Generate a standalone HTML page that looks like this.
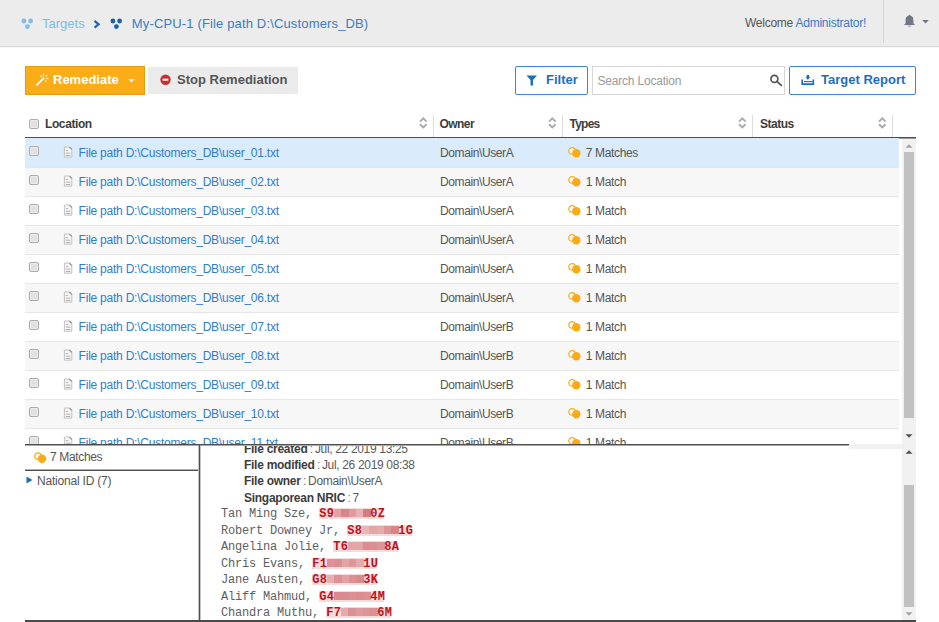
<!DOCTYPE html>
<html><head><meta charset="utf-8">
<style>
*{box-sizing:border-box;margin:0;padding:0}
html,body{width:939px;height:622px;overflow:hidden;background:#fff;font-family:"Liberation Sans",sans-serif;color:#555}
.abs{position:absolute}
.t{position:absolute;white-space:pre;line-height:1}
#hdr{position:absolute;left:0;top:0;width:939px;height:47px;background:#ececec;border-bottom:1px solid #dadada}
.cb{position:absolute;width:10px;height:10px;border:1px solid #ababab;border-radius:2px;background:#e1e1e1;box-shadow:inset 0 0 0 1px #ececec}
.row{position:absolute;left:25px;width:874px;height:29px;border-bottom:1px solid #e6e6e6}
.row .cb{left:4px;top:7px}
.fi{position:absolute;left:38px;top:7px}
.lnk{position:absolute;left:53.6px;top:8px;font-size:12px;line-height:1;color:#2f7dcc;white-space:pre;letter-spacing:-0.23px}
.own{position:absolute;left:415px;top:8px;font-size:12px;line-height:1;color:#555;white-space:pre;letter-spacing:-0.39px}
.mi{position:absolute;left:543px;top:7px}
.mt{position:absolute;left:560.8px;top:8px;font-size:12px;line-height:1;color:#555;white-space:pre;letter-spacing:-0.35px}
.hd{position:absolute;top:117.5px;font-size:12px;line-height:1;font-weight:bold;color:#3d3d3d;white-space:pre;letter-spacing:-0.3px}
.sort{position:absolute;top:117px}
.div{position:absolute;top:115px;width:1px;height:22px;background:#dcdcdc}
.sb{position:absolute;left:902px;width:14px;background:#f1f1f1}
.thumb{position:absolute;left:2px;width:10px;background:#c1c1c1}
.mono{position:absolute;left:221px;font-family:"Liberation Mono",monospace;font-size:12px;line-height:1;letter-spacing:-0.2px;color:#606060;white-space:pre}
.nr{position:absolute;height:11px;background:#f5dcdc;font-family:"Liberation Mono",monospace;font-weight:bold;font-size:12px;line-height:1;color:#c0101a;letter-spacing:0.3px}
.nr b{position:absolute;top:0}
.nr i{position:absolute;top:1px;height:8px;display:block}
.det{position:absolute;left:244px;font-size:12px;line-height:1;color:#5a5a5a;white-space:pre;letter-spacing:-0.33px}
.det b{color:#3d3d3d;letter-spacing:-0.27px}
.det s{text-decoration:none;color:#777;margin:0 2px 0 2.4px}
</style></head>
<body>
<!-- HEADER -->
<div id="hdr"></div>
<svg class="abs" style="left:21px;top:18px" width="13" height="12" viewBox="0 0 13 12"><circle cx="2.9" cy="3" r="2.4" fill="#7dbde9"/><circle cx="9.6" cy="3" r="2.4" fill="#7dbde9"/><circle cx="6.4" cy="8.6" r="2.4" fill="#7dbde9"/></svg>
<div class="t" style="left:42px;top:16.5px;font-size:13px;color:#7dbde9">Targets</div>
<svg class="abs" style="left:93px;top:20px" width="8" height="9" viewBox="0 0 8 9"><path d="M1.5 0.9 L5.6 4.3 L1.5 7.7" fill="none" stroke="#1b68b8" stroke-width="2.2"/></svg>
<svg class="abs" style="left:110px;top:18px" width="13" height="12" viewBox="0 0 13 12"><circle cx="2.9" cy="3" r="2.4" fill="#1b5fa8"/><circle cx="9.6" cy="3" r="2.4" fill="#1b5fa8"/><circle cx="6.4" cy="8.6" r="2.4" fill="#1b5fa8"/></svg>
<div class="t" style="left:131.8px;top:16.5px;font-size:13px;color:#3b7cc4;letter-spacing:0.15px">My-CPU-1 (File path D:\Customers_DB)</div>
<div class="t" style="left:745px;top:17px;font-size:12px;color:#555;letter-spacing:-0.25px">Welcome <span style="color:#3b7cc4">Administrator!</span></div>
<div class="abs" style="left:883px;top:0;width:1px;height:43px;background:#d4d4d4"></div><div class="abs" style="left:0;top:47px;width:939px;height:1px;background:#f5f5f5"></div>
<svg class="abs" style="left:903px;top:14px" width="13" height="14" viewBox="0 0 13 14"><path d="M6.5 0.6 L7.4 1.6 C9.6 2.3 10.4 4 10.4 6.3 L10.4 9.2 L12 11 L1 11 L2.6 9.2 L2.6 6.3 C2.6 4 3.4 2.3 5.6 1.6Z" fill="#6f7780"/><path d="M4.6 11.8 Q6.5 13.9 8.4 11.8Z" fill="#6f7780"/></svg>
<svg class="abs" style="left:922px;top:20px" width="7" height="4" viewBox="0 0 7 4"><path d="M0.2 0 L6.8 0 L3.5 3.4Z" fill="#6f7780"/></svg>

<!-- TOOLBAR -->
<div class="abs" style="left:25px;top:66px;width:120px;height:29px;background:#fbad18;border:1px solid #e69c0c"></div>
<svg class="abs" style="left:35px;top:73px" width="15" height="14" viewBox="0 0 15 14"><path d="M2 11.8 L8.6 5.2" stroke="#fff" stroke-width="1.7" stroke-linecap="round"/><path d="M8.4 1 L8.5 2.2 M11.7 2.2 L11 3 M5.4 3.2 L6.6 3.6 M12.9 5.4 L11.7 5.3 M10.8 8.2 L10.4 7.1" stroke="#fff" stroke-width="1.1" stroke-linecap="round"/></svg>
<div class="t" style="left:53px;top:73px;font-size:13px;font-weight:bold;color:#fff">Remediate</div>
<svg class="abs" style="left:127.5px;top:79px" width="7" height="4" viewBox="0 0 7 4"><path d="M0.3 0.3 L6.7 0.3 L3.5 3.3Z" fill="#fff"/></svg>

<div class="abs" style="left:148px;top:67px;width:150px;height:27px;background:#ebebeb"></div>
<svg class="abs" style="left:159.5px;top:74px" width="11" height="12" viewBox="0 0 11 12"><circle cx="5.5" cy="5.7" r="5.2" fill="#c9302c"/><rect x="2.6" y="4.7" width="5.8" height="2" fill="#fff"/></svg>
<div class="t" style="left:177px;top:73px;font-size:13px;font-weight:bold;color:#555">Stop Remediation</div>

<div class="abs" style="left:515px;top:66px;width:73px;height:29px;border:1px solid #3d86cc;border-radius:2px;background:#fff"></div>
<svg class="abs" style="left:526px;top:75px" width="12" height="11" viewBox="0 0 12 11"><path d="M0.5 0.5 L11 0.5 L7 5 L7 10.5 L4.5 10.5 L4.5 5Z" fill="#1c6ebf"/></svg>
<div class="t" style="left:546px;top:73px;font-size:13px;font-weight:bold;color:#1c6ebf">Filter</div>

<div class="abs" style="left:592px;top:66px;width:193px;height:29px;border:1px solid #d6d6d6;background:#fff"></div>
<div class="t" style="left:597.5px;top:74.7px;font-size:12px;color:#999;letter-spacing:-0.2px">Search Location</div>
<svg class="abs" style="left:769px;top:73px" width="14" height="14" viewBox="0 0 14 14"><circle cx="5.4" cy="5.9" r="3.45" fill="none" stroke="#555" stroke-width="1.7"/><path d="M7.9 8.4 L12.3 12.3" stroke="#555" stroke-width="1.8" stroke-linecap="round"/></svg>

<div class="abs" style="left:789px;top:66px;width:127px;height:29px;border:1px solid #3d86cc;border-radius:2px;background:#fff"></div>
<svg class="abs" style="left:801px;top:74px" width="14" height="12" viewBox="0 0 14 12"><path d="M5.6 1 L8.2 1 L8.2 3 L9.2 3 L6.9 5.9 L4.6 3 L5.6 3Z" fill="#1c6ebf"/><path d="M1.2 5.6 L1.2 10.2 L12.3 10.2 L12.3 5.6" fill="none" stroke="#1c6ebf" stroke-width="1.7"/><rect x="3" y="7" width="8.4" height="1.1" fill="#1c6ebf"/></svg>
<div class="t" style="left:821px;top:73px;font-size:13px;font-weight:bold;color:#1c6ebf">Target Report</div>

<!-- TABLE HEADER -->
<div class="cb" style="left:29px;top:118.6px"></div>
<div class="hd" style="left:45px;letter-spacing:-0.4px">Location</div>
<div class="hd" style="left:439.5px;letter-spacing:-0.55px">Owner</div>
<div class="hd" style="left:569.5px;letter-spacing:-0.75px">Types</div>
<div class="hd" style="left:760px;letter-spacing:-0.5px">Status</div>
<svg class="sort" style="left:419px" width="9" height="13" viewBox="0 0 9 13"><path d="M1 4.6 L4.3 1.4 L7.6 4.6 M1 7.3 L4.3 10.5 L7.6 7.3" fill="none" stroke="#aaa" stroke-width="1.9"/></svg>
<svg class="sort" style="left:548px" width="9" height="13" viewBox="0 0 9 13"><path d="M1 4.6 L4.3 1.4 L7.6 4.6 M1 7.3 L4.3 10.5 L7.6 7.3" fill="none" stroke="#aaa" stroke-width="1.9"/></svg>
<svg class="sort" style="left:738px" width="9" height="13" viewBox="0 0 9 13"><path d="M1 4.6 L4.3 1.4 L7.6 4.6 M1 7.3 L4.3 10.5 L7.6 7.3" fill="none" stroke="#aaa" stroke-width="1.9"/></svg>
<svg class="sort" style="left:878px" width="9" height="13" viewBox="0 0 9 13"><path d="M1 4.6 L4.3 1.4 L7.6 4.6 M1 7.3 L4.3 10.5 L7.6 7.3" fill="none" stroke="#aaa" stroke-width="1.9"/></svg>
<div class="div" style="left:433px"></div>
<div class="div" style="left:562px"></div>
<div class="div" style="left:752px"></div>
<div class="div" style="left:892px"></div>
<div class="abs" style="left:25px;top:137px;width:891px;height:1px;background:#4d4d4d"></div><div class="abs" style="left:25px;top:138px;width:891px;height:1px;background:#9a9a9a"></div>

<!-- ROWS -->
<div class="abs" style="left:0;top:138px;width:939px;height:306px;overflow:hidden"><div style="position:absolute;left:0;top:-138px;width:939px;height:700px"><div class="abs" style="left:25px;top:138px;width:874px;height:1px;background:#daebfb"></div><div class="row" style="top:139px;background:#daebfb"><div class="cb"></div><svg class="fi" width="10" height="12" viewBox="0 0 10 12"><path d="M1.4 1 L6.5 1 L8.8 3.3 L8.8 11.2 L1.4 11.2Z" fill="#f6f6f6" stroke="#c2c2c2"/><path d="M6.3 1 L8.8 3.5" fill="none" stroke="#9a9a9a" stroke-width="1.2"/><path d="M2.8 4.6 L5.2 4.6 M2.8 7.2 L7.4 7.2 M2.8 9.5 L7.4 9.5" stroke="#b0b0b0" stroke-width="1"/></svg><div class="lnk">File path D:\Customers_DB\user_01.txt</div><div class="own">Domain\UserA</div><svg class="mi" width="14" height="13" viewBox="0 0 14 13"><circle cx="4.1" cy="4.9" r="3.25" fill="#fff" stroke="#f9ab16" stroke-width="1.3"/><circle cx="8.3" cy="7.3" r="4.2" fill="#f9ab16"/></svg><div class="mt">7 Matches</div></div><div class="row" style="top:168px;background:#f7f7f7"><div class="cb"></div><svg class="fi" width="10" height="12" viewBox="0 0 10 12"><path d="M1.4 1 L6.5 1 L8.8 3.3 L8.8 11.2 L1.4 11.2Z" fill="#f6f6f6" stroke="#c2c2c2"/><path d="M6.3 1 L8.8 3.5" fill="none" stroke="#9a9a9a" stroke-width="1.2"/><path d="M2.8 4.6 L5.2 4.6 M2.8 7.2 L7.4 7.2 M2.8 9.5 L7.4 9.5" stroke="#b0b0b0" stroke-width="1"/></svg><div class="lnk">File path D:\Customers_DB\user_02.txt</div><div class="own">Domain\UserA</div><svg class="mi" width="14" height="13" viewBox="0 0 14 13"><circle cx="4.1" cy="4.9" r="3.25" fill="#fff" stroke="#f9ab16" stroke-width="1.3"/><circle cx="8.3" cy="7.3" r="4.2" fill="#f9ab16"/></svg><div class="mt">1 Match</div></div><div class="row" style="top:197px;background:#fff"><div class="cb"></div><svg class="fi" width="10" height="12" viewBox="0 0 10 12"><path d="M1.4 1 L6.5 1 L8.8 3.3 L8.8 11.2 L1.4 11.2Z" fill="#f6f6f6" stroke="#c2c2c2"/><path d="M6.3 1 L8.8 3.5" fill="none" stroke="#9a9a9a" stroke-width="1.2"/><path d="M2.8 4.6 L5.2 4.6 M2.8 7.2 L7.4 7.2 M2.8 9.5 L7.4 9.5" stroke="#b0b0b0" stroke-width="1"/></svg><div class="lnk">File path D:\Customers_DB\user_03.txt</div><div class="own">Domain\UserA</div><svg class="mi" width="14" height="13" viewBox="0 0 14 13"><circle cx="4.1" cy="4.9" r="3.25" fill="#fff" stroke="#f9ab16" stroke-width="1.3"/><circle cx="8.3" cy="7.3" r="4.2" fill="#f9ab16"/></svg><div class="mt">1 Match</div></div><div class="row" style="top:226px;background:#f7f7f7"><div class="cb"></div><svg class="fi" width="10" height="12" viewBox="0 0 10 12"><path d="M1.4 1 L6.5 1 L8.8 3.3 L8.8 11.2 L1.4 11.2Z" fill="#f6f6f6" stroke="#c2c2c2"/><path d="M6.3 1 L8.8 3.5" fill="none" stroke="#9a9a9a" stroke-width="1.2"/><path d="M2.8 4.6 L5.2 4.6 M2.8 7.2 L7.4 7.2 M2.8 9.5 L7.4 9.5" stroke="#b0b0b0" stroke-width="1"/></svg><div class="lnk">File path D:\Customers_DB\user_04.txt</div><div class="own">Domain\UserA</div><svg class="mi" width="14" height="13" viewBox="0 0 14 13"><circle cx="4.1" cy="4.9" r="3.25" fill="#fff" stroke="#f9ab16" stroke-width="1.3"/><circle cx="8.3" cy="7.3" r="4.2" fill="#f9ab16"/></svg><div class="mt">1 Match</div></div><div class="row" style="top:255px;background:#fff"><div class="cb"></div><svg class="fi" width="10" height="12" viewBox="0 0 10 12"><path d="M1.4 1 L6.5 1 L8.8 3.3 L8.8 11.2 L1.4 11.2Z" fill="#f6f6f6" stroke="#c2c2c2"/><path d="M6.3 1 L8.8 3.5" fill="none" stroke="#9a9a9a" stroke-width="1.2"/><path d="M2.8 4.6 L5.2 4.6 M2.8 7.2 L7.4 7.2 M2.8 9.5 L7.4 9.5" stroke="#b0b0b0" stroke-width="1"/></svg><div class="lnk">File path D:\Customers_DB\user_05.txt</div><div class="own">Domain\UserA</div><svg class="mi" width="14" height="13" viewBox="0 0 14 13"><circle cx="4.1" cy="4.9" r="3.25" fill="#fff" stroke="#f9ab16" stroke-width="1.3"/><circle cx="8.3" cy="7.3" r="4.2" fill="#f9ab16"/></svg><div class="mt">1 Match</div></div><div class="row" style="top:284px;background:#f7f7f7"><div class="cb"></div><svg class="fi" width="10" height="12" viewBox="0 0 10 12"><path d="M1.4 1 L6.5 1 L8.8 3.3 L8.8 11.2 L1.4 11.2Z" fill="#f6f6f6" stroke="#c2c2c2"/><path d="M6.3 1 L8.8 3.5" fill="none" stroke="#9a9a9a" stroke-width="1.2"/><path d="M2.8 4.6 L5.2 4.6 M2.8 7.2 L7.4 7.2 M2.8 9.5 L7.4 9.5" stroke="#b0b0b0" stroke-width="1"/></svg><div class="lnk">File path D:\Customers_DB\user_06.txt</div><div class="own">Domain\UserA</div><svg class="mi" width="14" height="13" viewBox="0 0 14 13"><circle cx="4.1" cy="4.9" r="3.25" fill="#fff" stroke="#f9ab16" stroke-width="1.3"/><circle cx="8.3" cy="7.3" r="4.2" fill="#f9ab16"/></svg><div class="mt">1 Match</div></div><div class="row" style="top:313px;background:#fff"><div class="cb"></div><svg class="fi" width="10" height="12" viewBox="0 0 10 12"><path d="M1.4 1 L6.5 1 L8.8 3.3 L8.8 11.2 L1.4 11.2Z" fill="#f6f6f6" stroke="#c2c2c2"/><path d="M6.3 1 L8.8 3.5" fill="none" stroke="#9a9a9a" stroke-width="1.2"/><path d="M2.8 4.6 L5.2 4.6 M2.8 7.2 L7.4 7.2 M2.8 9.5 L7.4 9.5" stroke="#b0b0b0" stroke-width="1"/></svg><div class="lnk">File path D:\Customers_DB\user_07.txt</div><div class="own">Domain\UserB</div><svg class="mi" width="14" height="13" viewBox="0 0 14 13"><circle cx="4.1" cy="4.9" r="3.25" fill="#fff" stroke="#f9ab16" stroke-width="1.3"/><circle cx="8.3" cy="7.3" r="4.2" fill="#f9ab16"/></svg><div class="mt">1 Match</div></div><div class="row" style="top:342px;background:#f7f7f7"><div class="cb"></div><svg class="fi" width="10" height="12" viewBox="0 0 10 12"><path d="M1.4 1 L6.5 1 L8.8 3.3 L8.8 11.2 L1.4 11.2Z" fill="#f6f6f6" stroke="#c2c2c2"/><path d="M6.3 1 L8.8 3.5" fill="none" stroke="#9a9a9a" stroke-width="1.2"/><path d="M2.8 4.6 L5.2 4.6 M2.8 7.2 L7.4 7.2 M2.8 9.5 L7.4 9.5" stroke="#b0b0b0" stroke-width="1"/></svg><div class="lnk">File path D:\Customers_DB\user_08.txt</div><div class="own">Domain\UserB</div><svg class="mi" width="14" height="13" viewBox="0 0 14 13"><circle cx="4.1" cy="4.9" r="3.25" fill="#fff" stroke="#f9ab16" stroke-width="1.3"/><circle cx="8.3" cy="7.3" r="4.2" fill="#f9ab16"/></svg><div class="mt">1 Match</div></div><div class="row" style="top:371px;background:#fff"><div class="cb"></div><svg class="fi" width="10" height="12" viewBox="0 0 10 12"><path d="M1.4 1 L6.5 1 L8.8 3.3 L8.8 11.2 L1.4 11.2Z" fill="#f6f6f6" stroke="#c2c2c2"/><path d="M6.3 1 L8.8 3.5" fill="none" stroke="#9a9a9a" stroke-width="1.2"/><path d="M2.8 4.6 L5.2 4.6 M2.8 7.2 L7.4 7.2 M2.8 9.5 L7.4 9.5" stroke="#b0b0b0" stroke-width="1"/></svg><div class="lnk">File path D:\Customers_DB\user_09.txt</div><div class="own">Domain\UserB</div><svg class="mi" width="14" height="13" viewBox="0 0 14 13"><circle cx="4.1" cy="4.9" r="3.25" fill="#fff" stroke="#f9ab16" stroke-width="1.3"/><circle cx="8.3" cy="7.3" r="4.2" fill="#f9ab16"/></svg><div class="mt">1 Match</div></div><div class="row" style="top:400px;background:#f7f7f7"><div class="cb"></div><svg class="fi" width="10" height="12" viewBox="0 0 10 12"><path d="M1.4 1 L6.5 1 L8.8 3.3 L8.8 11.2 L1.4 11.2Z" fill="#f6f6f6" stroke="#c2c2c2"/><path d="M6.3 1 L8.8 3.5" fill="none" stroke="#9a9a9a" stroke-width="1.2"/><path d="M2.8 4.6 L5.2 4.6 M2.8 7.2 L7.4 7.2 M2.8 9.5 L7.4 9.5" stroke="#b0b0b0" stroke-width="1"/></svg><div class="lnk">File path D:\Customers_DB\user_10.txt</div><div class="own">Domain\UserB</div><svg class="mi" width="14" height="13" viewBox="0 0 14 13"><circle cx="4.1" cy="4.9" r="3.25" fill="#fff" stroke="#f9ab16" stroke-width="1.3"/><circle cx="8.3" cy="7.3" r="4.2" fill="#f9ab16"/></svg><div class="mt">1 Match</div></div><div class="row" style="top:429px;background:#fff"><div class="cb"></div><svg class="fi" width="10" height="12" viewBox="0 0 10 12"><path d="M1.4 1 L6.5 1 L8.8 3.3 L8.8 11.2 L1.4 11.2Z" fill="#f6f6f6" stroke="#c2c2c2"/><path d="M6.3 1 L8.8 3.5" fill="none" stroke="#9a9a9a" stroke-width="1.2"/><path d="M2.8 4.6 L5.2 4.6 M2.8 7.2 L7.4 7.2 M2.8 9.5 L7.4 9.5" stroke="#b0b0b0" stroke-width="1"/></svg><div class="lnk">File path D:\Customers_DB\user_11.txt</div><div class="own">Domain\UserB</div><svg class="mi" width="14" height="13" viewBox="0 0 14 13"><circle cx="4.1" cy="4.9" r="3.25" fill="#fff" stroke="#f9ab16" stroke-width="1.3"/><circle cx="8.3" cy="7.3" r="4.2" fill="#f9ab16"/></svg><div class="mt">1 Match</div></div></div></div>

<!-- upper scrollbar -->
<div class="sb" style="top:139px;height:310px">
  <svg class="abs" style="left:3px;top:5px" width="8" height="4" viewBox="0 0 8 4"><path d="M0.5 3.8 L4 0.3 L7.5 3.8Z" fill="#a3a3a3"/></svg>
  <div class="thumb" style="top:13px;height:266px"></div>
  <svg class="abs" style="left:3px;top:295px" width="8" height="4" viewBox="0 0 8 4"><path d="M0.5 0.2 L4 3.7 L7.5 0.2Z" fill="#505050"/></svg>
</div>

<!-- LOWER PANEL -->
<div class="abs" style="left:0;top:444px;width:902px;height:178px;background:#fff"></div>
<div class="abs" style="left:25px;top:444px;width:824px;height:1px;background:#4f4f4f"></div><div class="abs" style="left:25px;top:445px;width:824px;height:1px;background:#a8a8a8"></div>
<div class="abs" style="left:849px;top:444px;width:53px;height:5px;background:#f1f1f1"></div>
<div class="abs" style="left:25px;top:470px;width:176px;height:1px;background:#4f4f4f"></div><div class="abs" style="left:25px;top:469px;width:174px;height:1px;background:#b0b0b0"></div>
<div class="abs" style="left:199px;top:445px;width:1px;height:177px;background:#4f4f4f"></div><div class="abs" style="left:198px;top:446px;width:1px;height:176px;background:#c4c4c4"></div><div class="abs" style="left:200px;top:446px;width:1px;height:176px;background:#c4c4c4"></div>
<div class="abs" style="left:25px;top:620px;width:891px;height:2px;background:#4a4a4a"></div>

<svg class="abs" style="left:33px;top:450.5px" width="14" height="13" viewBox="0 0 14 13"><circle cx="5" cy="5.2" r="3.3" fill="#fff" stroke="#f9ab16" stroke-width="1.3"/><circle cx="9" cy="7.8" r="4.2" fill="#f9ab16"/></svg>
<div class="t" style="left:50px;top:451px;font-size:12px;color:#555;letter-spacing:-0.35px">7 Matches</div>
<svg class="abs" style="left:26px;top:476px" width="7" height="8" viewBox="0 0 7 8"><path d="M0.5 0.5 L6.5 4 L0.5 7.5Z" fill="#1c6ebf"/></svg>
<div class="t" style="left:37px;top:474.5px;font-size:12px;color:#555;letter-spacing:-0.2px">National ID (7)</div>

<div class="abs" style="left:201px;top:446px;width:701px;height:174px;overflow:hidden"><div style="position:absolute;left:-201px;top:-446px;width:939px;height:622px"><div class="det" style="top:443px"><b>File created</b><s>:</s>Jul, 22 2019 13:25</div><div class="det" style="top:459px"><b>File modified</b><s>:</s>Jul, 26 2019 08:38</div><div class="det" style="top:475px"><b>File owner</b><s>:</s>Domain\UserA</div><div class="det" style="top:492px"><b>Singaporean NRIC</b><s>:</s>7</div><div class="mono" style="top:508.0px">Tan Ming Sze, <span class="nr" style="left:98.2px;top:0;width:65px"><i style="left:15.0px;width:7.4px;background:#e3a3a5"></i><i style="left:22.3px;width:7.4px;background:#d98488"></i><i style="left:29.6px;width:7.4px;background:#e19b9e"></i><i style="left:36.9px;width:7.4px;background:#e8b2b4"></i><i style="left:44.2px;width:7.4px;background:#d67c80"></i><b style="left:0">S9</b><b style="left:51px">0Z</b></span></div><div class="mono" style="top:524.5px">Robert Downey Jr, <span class="nr" style="left:126.2px;top:0;width:65px"><i style="left:15.0px;width:7.4px;background:#e9b5b7"></i><i style="left:22.3px;width:7.4px;background:#e3a6a8"></i><i style="left:29.6px;width:7.4px;background:#e5aaac"></i><i style="left:36.9px;width:7.4px;background:#de9497"></i><i style="left:44.2px;width:7.4px;background:#d98588"></i><b style="left:0">S8</b><b style="left:51px">1G</b></span></div><div class="mono" style="top:541.0px">Angelina Jolie, <span class="nr" style="left:112.2px;top:0;width:65px"><i style="left:15.0px;width:7.4px;background:#e3a5a7"></i><i style="left:22.3px;width:7.4px;background:#e3a5a7"></i><i style="left:29.6px;width:7.4px;background:#db8c8f"></i><i style="left:36.9px;width:7.4px;background:#dc8f92"></i><i style="left:44.2px;width:7.4px;background:#de9598"></i><b style="left:0">T6</b><b style="left:51px">8A</b></span></div><div class="mono" style="top:557.5px">Chris Evans, <span class="nr" style="left:91.2px;top:0;width:65px"><i style="left:15.0px;width:7.4px;background:#de9497"></i><i style="left:22.3px;width:7.4px;background:#dc8f92"></i><i style="left:29.6px;width:7.4px;background:#e3a4a6"></i><i style="left:36.9px;width:7.4px;background:#de9699"></i><i style="left:44.2px;width:7.4px;background:#e5aaac"></i><b style="left:0">F1</b><b style="left:51px">1U</b></span></div><div class="mono" style="top:574.0px">Jane Austen, <span class="nr" style="left:91.2px;top:0;width:65px"><i style="left:15.0px;width:7.4px;background:#e6b0b2"></i><i style="left:22.3px;width:7.4px;background:#dd9194"></i><i style="left:29.6px;width:7.4px;background:#e2a1a4"></i><i style="left:36.9px;width:7.4px;background:#dd9194"></i><i style="left:44.2px;width:7.4px;background:#d98a8e"></i><b style="left:0">G8</b><b style="left:51px">3K</b></span></div><div class="mono" style="top:590.5px">Aliff Mahmud, <span class="nr" style="left:98.2px;top:0;width:65px"><i style="left:15.0px;width:7.4px;background:#da8a8d"></i><i style="left:22.3px;width:7.4px;background:#d58b91"></i><i style="left:29.6px;width:7.4px;background:#dc8f92"></i><i style="left:36.9px;width:7.4px;background:#da8c8f"></i><i style="left:44.2px;width:7.4px;background:#dc9093"></i><b style="left:0">G4</b><b style="left:51px">4M</b></span></div><div class="mono" style="top:607.0px">Chandra Muthu, <span class="nr" style="left:105.2px;top:0;width:65px"><i style="left:15.0px;width:7.4px;background:#e5abad"></i><i style="left:22.3px;width:7.4px;background:#dc9093"></i><i style="left:29.6px;width:7.4px;background:#e0999c"></i><i style="left:36.9px;width:7.4px;background:#de9598"></i><i style="left:44.2px;width:7.4px;background:#dc9194"></i><b style="left:0">F7</b><b style="left:51px">6M</b></span></div></div></div>

<div class="sb" style="top:449px;height:171px">
  <svg class="abs" style="left:3px;top:1px" width="8" height="4" viewBox="0 0 8 4"><path d="M0.5 3.8 L4 0.3 L7.5 3.8Z" fill="#505050"/></svg>
  <div class="thumb" style="top:36px;height:122px"></div>
  <svg class="abs" style="left:3px;top:163px" width="8" height="4" viewBox="0 0 8 4"><path d="M0.5 0.2 L4 3.7 L7.5 0.2Z" fill="#a3a3a3"/></svg>
</div>
</body></html>
